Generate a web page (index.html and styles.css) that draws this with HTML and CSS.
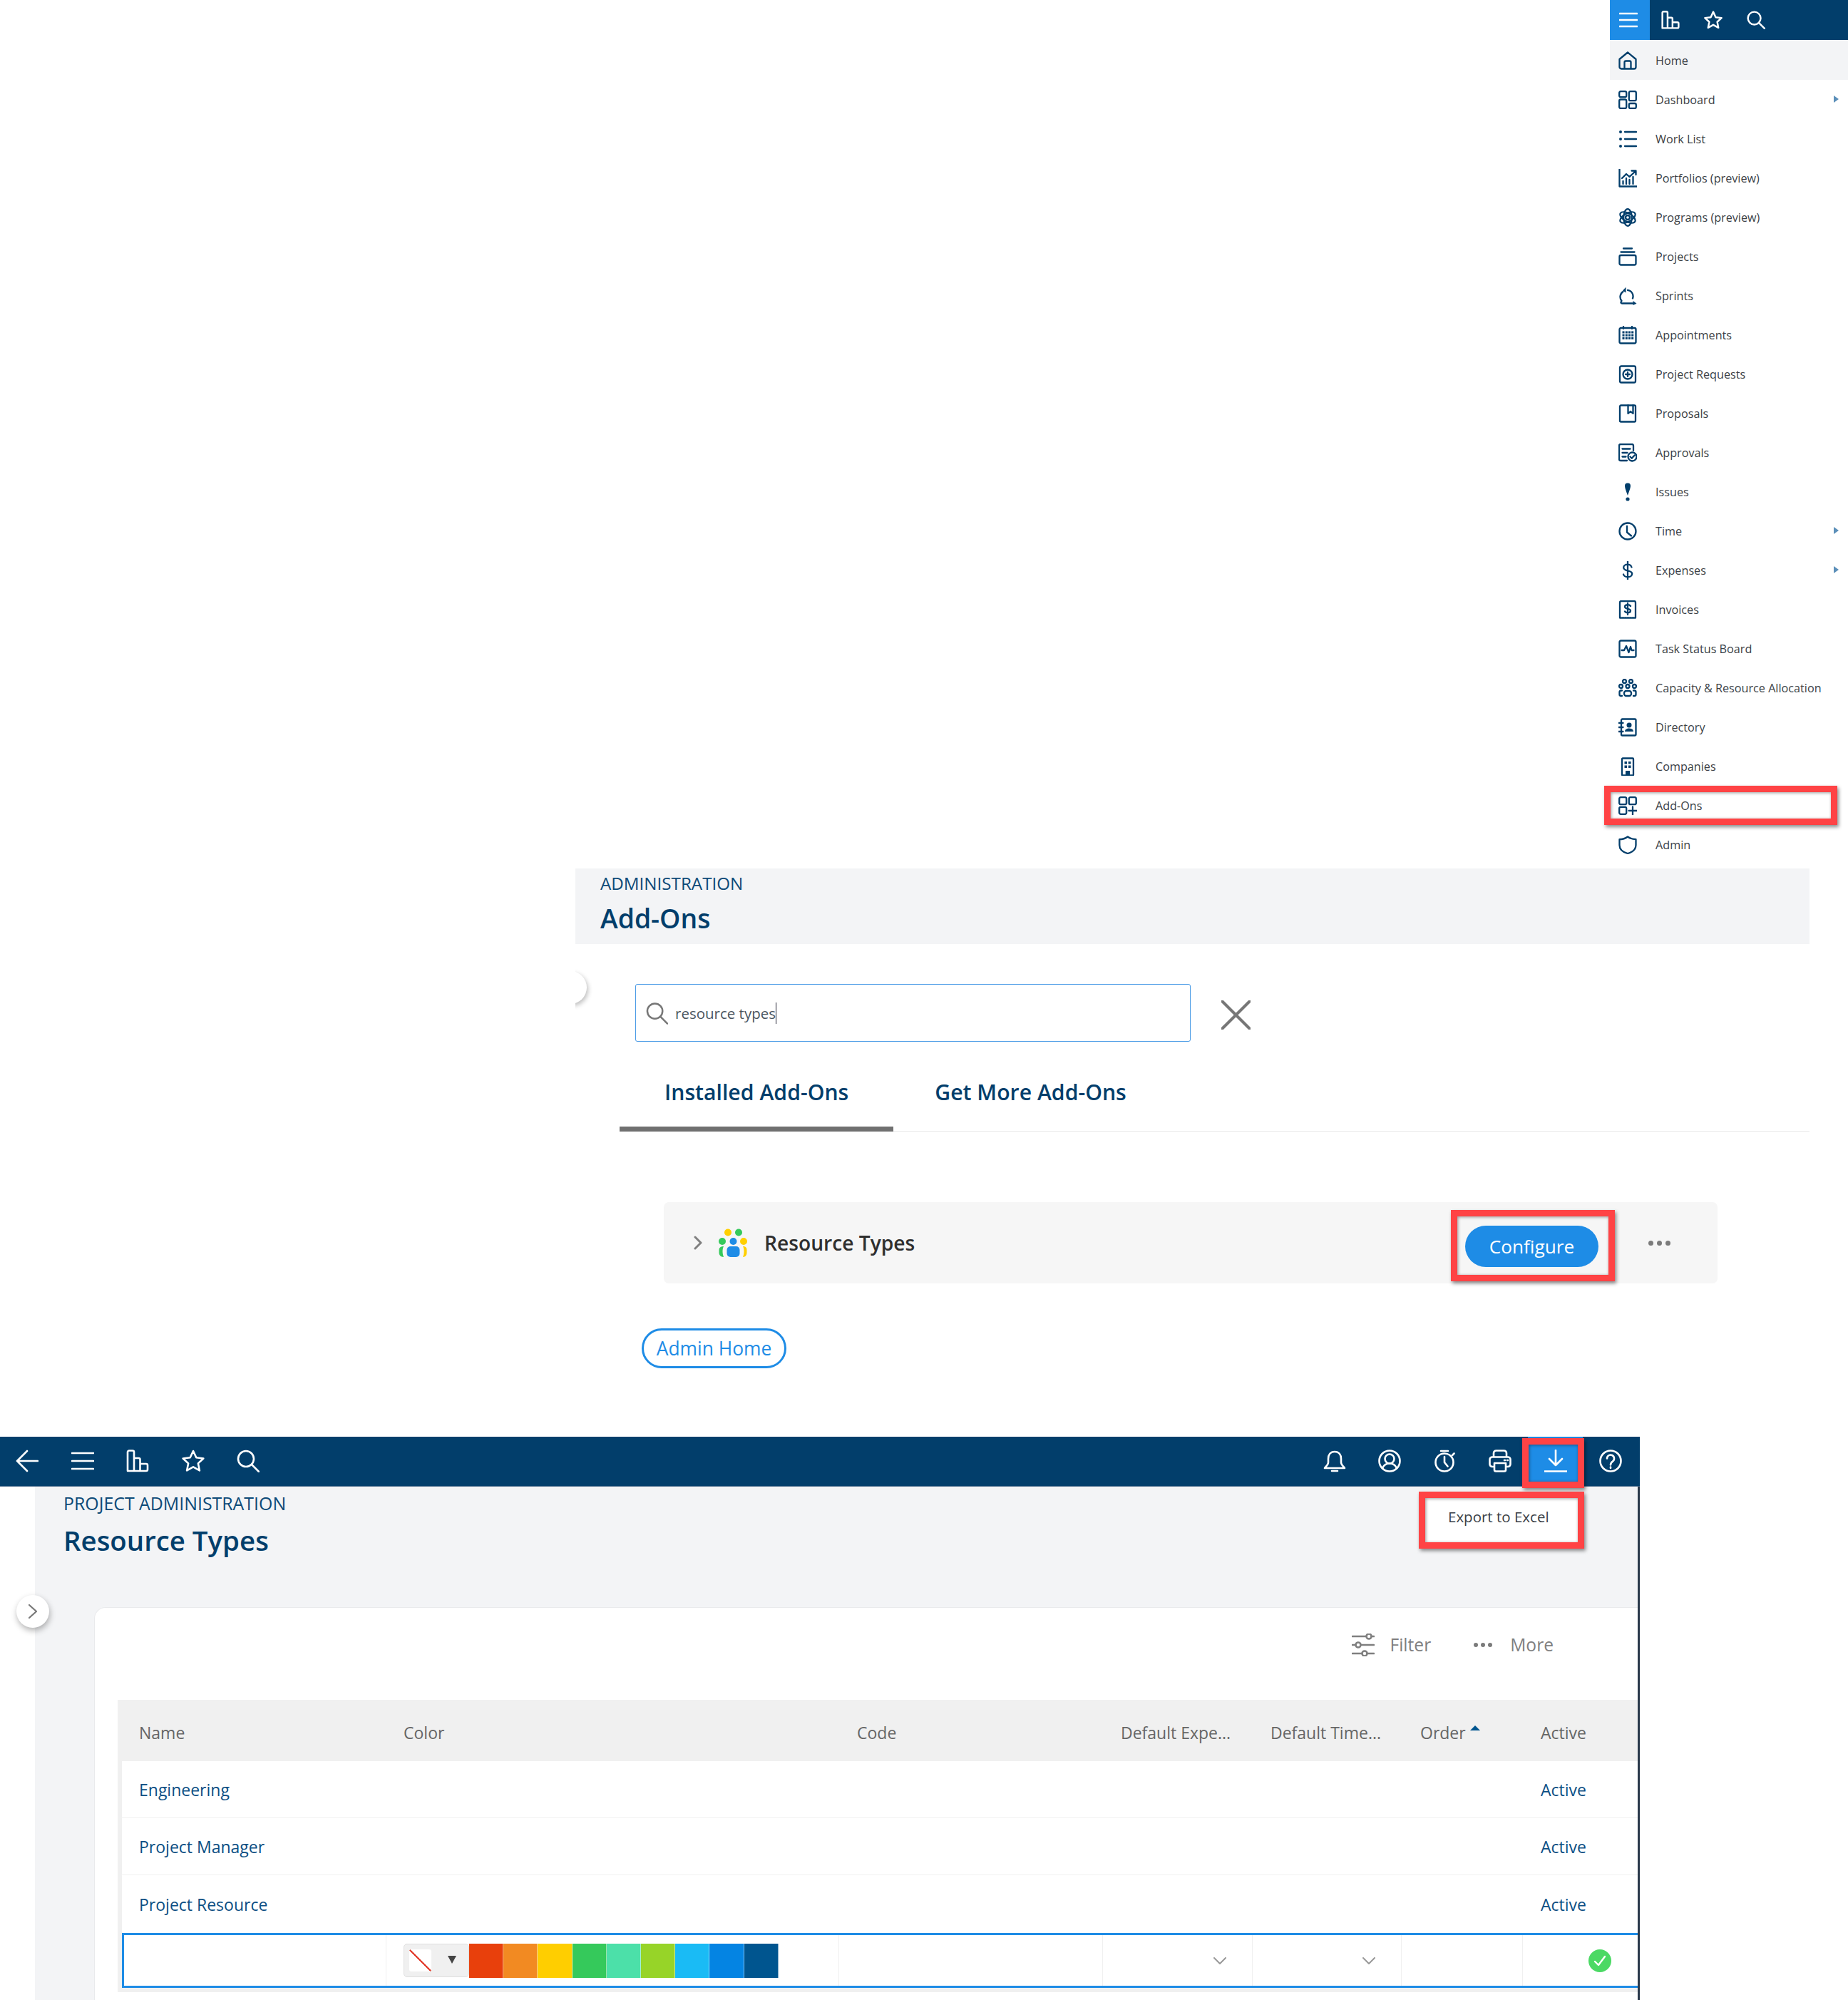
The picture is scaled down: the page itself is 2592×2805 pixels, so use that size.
FILE: index.html
```html
<!DOCTYPE html>
<html lang="en">
<head>
<meta charset="utf-8">
<title>Add-Ons and Resource Types</title>
<link rel="stylesheet" href="styles.css">
</head>
<body>
<svg class="sprite" width="0" height="0" aria-hidden="true">
  <defs>
    <symbol id="i-menu" viewBox="0 0 32 32"><path d="M1 5h30M1 16h30M1 27h30"/></symbol>
    <symbol id="i-bars" viewBox="0 0 32 32"><path d="M2 30V3.500a2 2 0 0 1 2-2h5a2 2 0 0 1 2 2V30zM11 12h6.500a2 2 0 0 1 2 2v16M19.500 20h8.500a2 2 0 0 1 2 2v6a2 2 0 0 1-2 2H11"/></symbol>
    <symbol id="i-star" viewBox="0 0 32 32"><path d="M16 2l4.300 9.300 10 1.200-7.400 6.900 2 10-8.900-5-8.900 5 2-10-7.400-6.900 10-1.200z"/></symbol>
    <symbol id="i-search" viewBox="0 0 32 32"><circle cx="13" cy="13" r="11"/><path d="M21 21l10 10"/></symbol>
    <symbol id="i-back" viewBox="0 0 32 32"><path d="M31 16H2M16 2L2 16l14 14"/></symbol>
    <symbol id="i-bell" viewBox="0 0 32 32"><path d="M16 3c-6 0-9 4.500-9 10v5c0 3-2.500 5-5 8h28c-2.500-3-5-5-5-8v-5c0-5.500-3-10-9-10zM12 30h8"/></symbol>
    <symbol id="i-user" viewBox="0 0 32 32"><circle cx="16" cy="16" r="14.500"/><circle cx="16" cy="13" r="6.500"/><path d="M6 26c2-4.500 5.500-6.500 10-6.500s8 2 10 6.500"/></symbol>
    <symbol id="i-timer" viewBox="0 0 32 32"><circle cx="15" cy="18" r="12.500"/><path d="M10 2h10M15 10v8l4.500 5.500M26 8l2.500-2.500"/></symbol>
    <symbol id="i-print" viewBox="0 0 32 32"><path d="M8 24H5a3.500 3.500 0 0 1-3.500-3.500V14A3.500 3.500 0 0 1 5 10.500h22a3.500 3.500 0 0 1 3.500 3.500v6.500A3.500 3.500 0 0 1 27 24h-3M7 10.500V5a3.500 3.500 0 0 1 3.500-3.500h11A3.500 3.500 0 0 1 25 5v5.500M8 19h16v9.500a2 2 0 0 1-2 2H10a2 2 0 0 1-2-2zM22 15h1M26 15h1"/></symbol>
    <symbol id="i-down" viewBox="0 0 32 32"><path d="M16 1v21M7 13l9 9 9-9M0 30.500h32"/></symbol>
    <symbol id="i-help" viewBox="0 0 32 32"><circle cx="16" cy="16" r="14.500"/><path d="M11 12.500a5 5 0 1 1 8 4c-2 1.500-3 2.500-3 5M16 24.500v1.500"/></symbol>
    <symbol id="i-filter" viewBox="0 0 32 32"><path d="M1 4h19M28 4h3M1 16h4M13 16h18M1 28h13M22 28h9"/><circle cx="24" cy="4" r="3.500"/><circle cx="9" cy="16" r="3.500"/><circle cx="18" cy="28" r="3.500"/></symbol>
    <symbol id="i-x" viewBox="0 0 40 40"><path d="M1 1l38 38M39 1L1 39"/></symbol>
    <symbol id="n-home" viewBox="0 0 26 26"><path d="M1.500 11L13 1.500 24.500 11v11a2.500 2.500 0 0 1-2.500 2.500H4A2.500 2.500 0 0 1 1.500 22zM8.500 24.500v-9a2 2 0 0 1 2-2h5a2 2 0 0 1 2 2v9"/></symbol>
    <symbol id="n-dash" viewBox="0 0 26 26"><rect x="1.200" y="1.200" width="10" height="8" rx="2"/><rect x="14.800" y="1.200" width="10" height="13" rx="2"/><rect x="1.200" y="12.500" width="10" height="12.500" rx="2"/><rect x="14.800" y="18" width="10" height="7" rx="2"/></symbol>
    <symbol id="n-list" viewBox="0 0 26 26"><path d="M9 3h16M9 13h16M9 23h16"/><circle class="solid" cx="3" cy="3" r="2"/><circle class="solid" cx="3" cy="13" r="2"/><circle class="solid" cx="3" cy="23" r="2"/></symbol>
    <symbol id="n-port" viewBox="0 0 26 26"><path d="M1.500 0v24.500H26M6.500 21v-4M11 21v-8M15.500 21v-6M20.500 21v-10M5 13l6-6 4.500 4L24 3M18.500 2.500H24.500V8"/></symbol>
    <symbol id="n-prog" viewBox="0 0 26 26"><circle cx="13" cy="13" r="3" stroke-width="2.400"/><ellipse cx="13" cy="13" rx="5.800" ry="11.800" stroke-width="2.200"/><ellipse cx="13" cy="13" rx="5.800" ry="11.800" stroke-width="2.200" transform="rotate(60 13 13)"/><ellipse cx="13" cy="13" rx="5.800" ry="11.800" stroke-width="2.200" transform="rotate(120 13 13)"/></symbol>
    <symbol id="n-proj" viewBox="0 0 26 26"><rect x="1.500" y="11" width="23" height="13.500" rx="2"/><path d="M3.500 6.500h19M7 1.500h12"/></symbol>
    <symbol id="n-sprint" viewBox="0 0 26 26"><path d="M6.500 7A8.800 8.800 0 0 0 4.500 20C3 22 3 23.500 5 23.500H20.500M13 4.800a8.800 8.800 0 0 1 7 11.700"/><path class="solid" d="M10.500 .800L6 5.500l4.500 3z"/><path class="solid" d="M20.500 20l5 3.700-5 2.300z"/></symbol>
    <symbol id="n-appt" viewBox="0 0 26 26"><rect x="1.500" y="3" width="23" height="21.500" rx="2"/><path d="M7 1v3M19 1v3"/><path class="solid" d="M5.500 7.500h3v3h-3zM9.800 7.500h3v3h-3zM14 7.500h3v3h-3zM18.200 7.500h3v3h-3zM5.500 11.800h3v3h-3zM9.800 11.800h3v3h-3zM14 11.800h3v3h-3zM18.200 11.800h3v3h-3zM5.500 16h3v3h-3zM9.800 16h3v3h-3zM14 16h3v3h-3zM18.200 16h3v3h-3z"/></symbol>
    <symbol id="n-req" viewBox="0 0 26 26"><rect x="2" y="1.500" width="22" height="23" rx="2"/><circle cx="13" cy="13" r="6.500"/><path d="M13 10v6M10 13h6"/></symbol>
    <symbol id="n-book" viewBox="0 0 26 26"><rect x="2" y="1.500" width="22" height="23" rx="1.500"/><path d="M13.500 1.500V13l3.500-3 3.500 3V1.500"/></symbol>
    <symbol id="n-appr" viewBox="0 0 26 26"><path d="M21 10V3a2 2 0 0 0-2-2H3a2 2 0 0 0-2 2v19a2 2 0 0 0 2 2h9M5.500 7.500h11M5.500 13h7M5.500 18.500h5"/><circle cx="19.500" cy="18.500" r="6"/><path d="M16.500 18.500l2.200 2.300 4-4.300"/></symbol>
    <symbol id="n-issue" viewBox="0 0 26 26"><path class="solid" d="M13 .500c2.800 0 4 1.200 4 4 0 3-2.800 10-4 13.500-1.200-3.500-4-10.500-4-13.500 0-2.800 1.200-4 4-4z"/><circle class="solid" cx="13" cy="23" r="2.600"/></symbol>
    <symbol id="n-time" viewBox="0 0 26 26"><circle cx="13" cy="13" r="11.500"/><path d="M12 6v8.500l6 5"/></symbol>
    <symbol id="n-dollar" viewBox="0 0 26 26"><path d="M18.500 8.500c-.8-2.500-3-3.800-5.500-3.800-3.500 0-5.800 1.800-5.800 4.300 0 6 12 3 12 8.800 0 2.700-2.700 4.400-6.200 4.400-3 0-5.200-1.300-6-3.700M13 .500v25"/></symbol>
    <symbol id="n-inv" viewBox="0 0 26 26"><path d="M2 24V3a2 2 0 0 1 2-2h18a2 2 0 0 1 2 2v21"/><path d="M2 24.500h22" stroke-dasharray="2 1.500"/><path d="M17 8c-.8-1.200-2.200-1.800-4-1.800-2.200 0-4 1-4 2.800 0 3.800 8 1.800 8 5.500 0 1.800-1.800 2.800-4 2.800-1.800 0-3.200-.6-4-1.800M13 4v16"/></symbol>
    <symbol id="n-task" viewBox="0 0 26 26"><rect x="1.500" y="1.500" width="23" height="23" rx="2"/><path d="M4.500 15h3.500l3-6 3.500 9 2.500-8 1.500 5h3"/></symbol>
    <symbol id="n-cap" viewBox="0 0 26 26"><circle cx="8.500" cy="3.500" r="2.500"/><circle cx="17.500" cy="3.500" r="2.500"/><circle cx="3.500" cy="10.500" r="2.500"/><circle cx="13" cy="10.500" r="2.500"/><circle cx="22.500" cy="10.500" r="2.500"/><rect x="8" y="17" width="10" height="7" rx="3"/><path d="M5 16.500H3.500a2 2 0 0 0-2 2V22a2 2 0 0 0 2 2H5M21 16.500h1.500a2 2 0 0 1 2 2V22a2 2 0 0 1-2 2H21"/></symbol>
    <symbol id="n-dir" viewBox="0 0 26 26"><rect x="4" y="1.500" width="20.500" height="23" rx="1.500"/><path d="M.500 7h6M.500 13h6M.500 19h6"/><circle class="solid" cx="15" cy="10" r="3.500"/><path class="solid" d="M9 19c0-3 3-4.500 6-4.500s6 1.500 6 4.500z"/></symbol>
    <symbol id="n-comp" viewBox="0 0 26 26"><rect x="5" y="1.500" width="16" height="24" rx="1"/><path class="solid" d="M8.500 6h3.500v3.500H8.500zM14 6h3.500v3.500H14zM8.500 11.500h3.500V15H8.500zM14 11.500h3.500V15H14zM10 19h6v6h-6z"/></symbol>
    <symbol id="n-add" viewBox="0 0 26 26"><rect x="1.200" y="1.200" width="10" height="10" rx="2"/><rect x="14.800" y="1.200" width="10" height="10" rx="2"/><rect x="1.200" y="14.800" width="10" height="10" rx="2"/><path d="M14.500 20h11.500M20 14.500V26"/></symbol>
    <symbol id="n-admin" viewBox="0 0 26 26"><path d="M13 1.500C9 4.500 6 5.200 1.500 5.200v8c0 6 5 10 11.500 11.800 6.500-1.800 11.500-5.800 11.500-11.800v-8C20 5.200 17 4.500 13 1.500z"/></symbol>
  </defs>
</svg>

<section class="menu-zone">
  <nav class="side">
    <div class="side-top">
      <span class="side-burger"><svg class="tb tb-small"><use href="#i-menu"/></svg></span>
      <svg class="tb tb-small"><use href="#i-bars"/></svg>
      <svg class="tb tb-small"><use href="#i-star"/></svg>
      <svg class="tb tb-small"><use href="#i-search"/></svg>
    </div>
    <ul class="side-list">
      <li class="side-item is-current"><svg class="nav-icon"><use href="#n-home"/></svg><span class="side-label">Home</span></li>
      <li class="side-item has-sub"><svg class="nav-icon"><use href="#n-dash"/></svg><span class="side-label">Dashboard</span></li>
      <li class="side-item"><svg class="nav-icon"><use href="#n-list"/></svg><span class="side-label">Work List</span></li>
      <li class="side-item"><svg class="nav-icon"><use href="#n-port"/></svg><span class="side-label">Portfolios (preview)</span></li>
      <li class="side-item"><svg class="nav-icon"><use href="#n-prog"/></svg><span class="side-label">Programs (preview)</span></li>
      <li class="side-item"><svg class="nav-icon"><use href="#n-proj"/></svg><span class="side-label">Projects</span></li>
      <li class="side-item"><svg class="nav-icon"><use href="#n-sprint"/></svg><span class="side-label">Sprints</span></li>
      <li class="side-item"><svg class="nav-icon"><use href="#n-appt"/></svg><span class="side-label">Appointments</span></li>
      <li class="side-item"><svg class="nav-icon"><use href="#n-req"/></svg><span class="side-label">Project Requests</span></li>
      <li class="side-item"><svg class="nav-icon"><use href="#n-book"/></svg><span class="side-label">Proposals</span></li>
      <li class="side-item"><svg class="nav-icon"><use href="#n-appr"/></svg><span class="side-label">Approvals</span></li>
      <li class="side-item"><svg class="nav-icon"><use href="#n-issue"/></svg><span class="side-label">Issues</span></li>
      <li class="side-item has-sub"><svg class="nav-icon"><use href="#n-time"/></svg><span class="side-label">Time</span></li>
      <li class="side-item has-sub"><svg class="nav-icon"><use href="#n-dollar"/></svg><span class="side-label">Expenses</span></li>
      <li class="side-item"><svg class="nav-icon"><use href="#n-inv"/></svg><span class="side-label">Invoices</span></li>
      <li class="side-item"><svg class="nav-icon"><use href="#n-task"/></svg><span class="side-label">Task Status Board</span></li>
      <li class="side-item"><svg class="nav-icon"><use href="#n-cap"/></svg><span class="side-label">Capacity &amp; Resource Allocation</span></li>
      <li class="side-item"><svg class="nav-icon"><use href="#n-dir"/></svg><span class="side-label">Directory</span></li>
      <li class="side-item"><svg class="nav-icon"><use href="#n-comp"/></svg><span class="side-label">Companies</span></li>
      <li class="side-item"><svg class="nav-icon"><use href="#n-add"/></svg><span class="side-label">Add-Ons</span></li>
      <li class="side-item"><svg class="nav-icon"><use href="#n-admin"/></svg><span class="side-label">Admin</span></li>
    </ul>
    <div class="mark mark-addons"></div>
  </nav>
</section>

<section class="addons">
  <header class="addons-head">
    <div class="eyebrow">ADMINISTRATION</div>
    <h1 class="page-title">Add-Ons</h1>
  </header>
  <div class="stub-toggle"></div>
  <div class="search-row">
    <div class="search-box">
      <svg class="search-icon"><use href="#i-search"/></svg>
      <span class="search-text">resource types</span><span class="caret"></span>
    </div>
    <svg class="clear-icon"><use href="#i-x"/></svg>
  </div>
  <div class="tabs">
    <div class="tab is-active">Installed Add-Ons</div>
    <div class="tab">Get More Add-Ons</div>
  </div>
  <div class="addon-card">
    <svg class="addon-chevron" viewBox="0 0 12 20"><path d="M2 2l8 8-8 8"/></svg>
    <svg class="addon-logo" viewBox="0 0 40 40">
      <circle cx="13" cy="5.500" r="5" fill="#ffcf00"/>
      <circle cx="28" cy="5.500" r="5" fill="#35c95b"/>
      <circle cx="5" cy="18" r="5" fill="#35c95b"/>
      <circle cx="20.500" cy="18" r="5" fill="#1e8ce6"/>
      <circle cx="35" cy="18" r="5" fill="#ffcf00"/>
      <rect x="11.500" y="25" width="18" height="15" rx="5" fill="#1e8ce6"/>
      <path d="M7 25c-3 0-6.500 1-6.500 5v4c0 3 2.500 6 6.500 6-1-3-1.500-5-1.500-8s.5-5 1.500-7z" fill="#35c95b"/>
      <path d="M34 25c3 0 5.500 1 5.500 5v4c0 3-2 6-5.500 6 1-3 1.500-5 1.500-8s-.5-5-1.500-7z" fill="#ffcf00"/>
    </svg>
    <span class="addon-name">Resource Types</span>
    <button class="btn-configure">Configure</button>
    <span class="dots dots-card"><i></i><i></i><i></i></span>
  </div>
  <button class="btn-outline">Admin Home</button>
  <div class="mark mark-configure"></div>
</section>

<section class="app">
  <div class="app-bar">
    <svg class="tb"><use href="#i-back"/></svg>
    <svg class="tb"><use href="#i-menu"/></svg>
    <svg class="tb"><use href="#i-bars"/></svg>
    <svg class="tb"><use href="#i-star"/></svg>
    <svg class="tb"><use href="#i-search"/></svg>
    <div class="bar-spacer"></div>
    <svg class="tb"><use href="#i-bell"/></svg>
    <svg class="tb"><use href="#i-user"/></svg>
    <svg class="tb"><use href="#i-timer"/></svg>
    <svg class="tb"><use href="#i-print"/></svg>
    <span class="bar-active"><svg class="tb"><use href="#i-down"/></svg></span>
    <svg class="tb"><use href="#i-help"/></svg>
  </div>
  <div class="app-main">
    <div class="eyebrow eyebrow-app">PROJECT ADMINISTRATION</div>
    <h2 class="page-title page-title-app">Resource Types</h2>
    <div class="panel">
      <div class="toolbar">
        <svg class="tool-icon"><use href="#i-filter"/></svg>
        <span class="tool-text">Filter</span>
        <span class="dots dots-tool"><i></i><i></i><i></i></span>
        <span class="tool-text">More</span>
      </div>
      <div class="grid-wrap">
        <div class="grid-row grid-head">
          <span>Name</span><span>Color</span><span>Code</span><span>Default Expe...</span><span>Default Time...</span><span class="sorted">Order</span><span>Active</span>
        </div>
        <div class="grid-body">
          <div class="grid-row grid-data">
            <span>Engineering</span><span></span><span></span><span></span><span></span><span></span><span>Active</span>
          </div>
          <div class="grid-row grid-data">
            <span>Project Manager</span><span></span><span></span><span></span><span></span><span></span><span>Active</span>
          </div>
          <div class="grid-row grid-data grid-last">
            <span>Project Resource</span><span></span><span></span><span></span><span></span><span></span><span>Active</span>
          </div>
          <div class="edit-row">
            <div class="edit-cell"></div>
            <div class="edit-cell cell-color">
              <div class="picker"><span class="picker-swatch"></span><span class="picker-caret"></span></div>
              <div class="palette">
                <i class="c1"></i><i class="c2"></i><i class="c3"></i><i class="c4"></i><i class="c5"></i><i class="c6"></i><i class="c7"></i><i class="c8"></i><i class="c9"></i>
              </div>
            </div>
            <div class="edit-cell"></div>
            <div class="edit-cell cell-select"><svg class="select-chevron" viewBox="0 0 18 10"><path d="M1 1l8 8 8-8"/></svg></div>
            <div class="edit-cell cell-select"><svg class="select-chevron" viewBox="0 0 18 10"><path d="M1 1l8 8 8-8"/></svg></div>
            <div class="edit-cell"></div>
            <div class="edit-cell cell-check">
              <svg class="check-badge" viewBox="0 0 32 32"><circle cx="16" cy="16" r="16"/><path d="M9 17l5 5 9-12"/></svg>
            </div>
          </div>
        </div>
      </div>
    </div>
  </div>
  <div class="round-toggle"><svg class="round-chevron" viewBox="0 0 14 22"><path d="M2 2l10 9-10 9"/></svg></div>
  <div class="popover">Export to Excel</div>
  <div class="mark mark-download"></div>
  <div class="mark mark-export"></div>
</section>
</body>
</html>
```

FILE: styles.css
```css
* { box-sizing: border-box; }
html, body { margin: 0; padding: 0; background: #fff; }
body {
  width: 2592px;
  height: 2805px;
  overflow: hidden;
  font-family: "Open Sans", "Noto Sans", sans-serif;
  color: #3b3f46;
}
.sprite { position: absolute; }
svg { fill: none; stroke: currentColor; stroke-linecap: round; stroke-linejoin: round; flex: none; }
.solid { fill: currentColor; stroke: none; }

.mark {
  position: absolute;
  border: 9px solid #ff4345;
  box-shadow: 2px 3px 5px rgba(0, 0, 0, .45), inset 1px 1px 4px rgba(0, 0, 0, .4);
  pointer-events: none;
}

/* Side menu */
.menu-zone { display: flex; justify-content: flex-end; height: 1218px; }
.side { position: relative; width: 334px; }
.side-top {
  display: flex;
  align-items: center;
  gap: 34px;
  height: 56px;
  background: #023e6b;
  color: #fff;
}
.side-burger {
  display: flex;
  align-items: center;
  justify-content: flex-start;
  width: 56px;
  height: 56px;
  padding-left: 13px;
  margin-right: -18px;
  background: #1e8ce6;
}
.tb { width: 32px; height: 32px; stroke-width: 2.6; color: #fff; }
.tb-small { width: 26px; height: 26px; stroke-width: 3; }
.side-list { list-style: none; margin: 1px 0 0; padding: 0; }
.side-item {
  position: relative;
  display: flex;
  align-items: center;
  gap: 26px;
  height: 55px;
  padding-left: 12px;
  font-size: 16.200px;
}
.side-item.is-current { background: #f3f4f6; }
.has-sub::after {
  content: "";
  position: absolute;
  right: 13px;
  top: 22px;
  border-left: 7px solid #5b8fb9;
  border-top: 5.5px solid transparent;
  border-bottom: 5.5px solid transparent;
}
.nav-icon { width: 26px; height: 26px; color: #023e6b; stroke-width: 2.3; }
.mark-addons { left: -8px; top: 1102px; width: 327px; height: 55px; }

/* Add-ons section */
.addons { position: relative; width: 1731px; height: 797px; margin-left: 807px; }
.addons-head { height: 106px; padding: 4px 0 0 35px; background: #f3f4f6; }
.eyebrow { font-size: 24.200px; line-height: 33px; color: #0d4a78; }
.page-title { margin: 0; font-size: 37.300px; font-weight: 600; line-height: 49px; color: #023e6b; }
.addons-head .page-title { margin-top: 8px; }
.stub-toggle {
  position: absolute;
  left: -30px;
  top: 144px;
  width: 46px;
  height: 46px;
  border-radius: 50%;
  background: #fff;
  box-shadow: 2px 3px 6px rgba(0, 0, 0, .25);
  clip-path: inset(-10px -10px -10px 30px);
}
.search-row { display: flex; align-items: center; gap: 43px; margin: 56px 0 0 84px; }
.search-box {
  display: flex;
  align-items: center;
  width: 779px;
  height: 81px;
  padding-left: 14px;
  border: 1.500px solid #4a9be6;
  border-radius: 3px;
  color: #777;
}
.search-icon { width: 31px; height: 32px; stroke-width: 2.6; margin-right: 10px; }
.search-text { font-size: 20.500px; color: #4a5560; }
.caret { width: 1px; height: 30px; background: #223; }
.clear-icon { width: 41px; height: 41px; stroke-width: 4; color: #777; margin-top: 5px; }
.tabs { display: flex; margin: 35px 0 0 62px; border-bottom: 1px solid #e8e8e8; }
.tab {
  height: 90px;
  padding: 0 63px;
  font-size: 30.200px;
  font-weight: 600;
  line-height: 71px;
  color: #023e6b;
}
.tab + .tab { padding-left: 58px; }
.tab.is-active { border-bottom: 7px solid #707070; margin-bottom: -1px; height: 91px; }
.addon-card {
  display: flex;
  align-items: center;
  width: 1478px;
  height: 114px;
  margin: 99px 0 0 124px;
  padding: 0 66px 0 42px;
  border-radius: 7px;
  background: #f6f6f6;
}
.addon-chevron { width: 12px; height: 20px; stroke-width: 3; color: #808080; margin-right: 23px; }
.addon-logo { width: 40px; height: 40px; stroke: none; margin-right: 24px; }
.addon-name { font-size: 28.200px; font-weight: 600; color: #2f2f2f; }
.btn-configure {
  width: 187px;
  height: 58px;
  margin: 10px 70px 0 auto;
  padding: 0;
  border: 0;
  border-radius: 29px;
  background: #1e8ce6;
  font: 400 26.200px "Open Sans", sans-serif;
  color: #fff;
}
.dots { display: inline-flex; gap: 5px; }
.dots i { border-radius: 50%; background: #7b7b7b; }
.dots-card i { width: 7px; height: 7px; }
.dots-card { width: 31px; gap: 5px; }
.btn-outline {
  display: block;
  width: 203px;
  height: 56px;
  margin: 63px 0 0 93px;
  padding: 0;
  border: 3px solid #1e8ce6;
  border-radius: 28px;
  background: #fff;
  font: 400 26.400px "Open Sans", sans-serif;
  color: #1e8ce6;
}
.mark-configure { left: 1228px; top: 479px; width: 230px; height: 100px; }

/* Resource types application */
.app { position: relative; width: 2300px; height: 790px; overflow: hidden; }
.app-bar {
  display: flex;
  align-items: center;
  gap: 45.500px;
  height: 70px;
  padding: 0 0 2px 22px;
  background: #023e6b;
  border-bottom: 1px solid #47698a;
}
.bar-spacer { flex: 1; }
.bar-active {
  display: flex;
  align-items: center;
  justify-content: center;
  align-self: stretch;
  width: 77px;
  margin: 0 -22.500px -3px;
  padding-bottom: 2px;
  background: #1e8ce6;
}
.app-bar > .tb:last-child { margin-right: 25px; }
.app-main {
  height: 720px;
  margin-left: 49px;
  padding: 7px 0 0 40px;
  background: #f3f4f6;
  border-right: 3px solid #2b3a4c;
  display: flex;
  flex-direction: column;
}
.eyebrow-app { flex: none; font-size: 24.900px; }
.page-title-app { flex: none; margin-top: 11px; font-size: 38.400px; }
.panel {
  flex: 1;
  margin: 69px 0 0 43px;
  background: #fff;
  border: 1px solid #e9eaec;
  border-right: 0;
  border-bottom: 0;
  border-radius: 16px 0 0 0;
}
.toolbar {
  display: flex;
  align-items: center;
  justify-content: flex-end;
  height: 129px;
  padding: 0 118px 26px 0;
  color: #7f7f7f;
}
.tool-icon { width: 32px; height: 32px; stroke-width: 2.6; margin-right: 21px; }
.tool-text { font-size: 24.600px; }
.dots-tool { margin: 0 25px 0 60px; gap: 4px; }
.dots-tool i { width: 6px; height: 6px; }
.grid-wrap { margin-left: 32px; font-size: 23px; }
.grid-row {
  display: grid;
  grid-template-columns: 371px 636px 370px 210px 210px 169px 1fr;
  align-items: center;
  padding-left: 30px;
}
.grid-head { height: 86px; background: #f0f0f0; color: #666; padding-top: 6px; }
.sorted { position: relative; }
.sorted::after {
  content: "";
  position: absolute;
  left: 70px;
  top: 6px;
  border-bottom: 7px solid #00558f;
  border-left: 7px solid transparent;
  border-right: 7px solid transparent;
}
.grid-body { padding: 0 0 6px 6px; background: #f0f0f0; }
.grid-data {
  height: 80px;
  padding-left: 24px;
  background: #fff;
  border-bottom: 1px solid #f1f1f1;
  color: #0d4f84;
}
.grid-last { height: 81px; border-bottom: 0; }
.edit-row {
  display: grid;
  grid-template-columns: 368px 635px 370px 210px 209px 170px 1fr;
  height: 77px;
  background: #fff;
  border: solid #1e8ce6;
  border-width: 3px 0 3px 3px;
}
.edit-cell { border-right: 1px solid #f0f0f0; }
.edit-cell:last-child { border-right: 0; }
.cell-color { display: flex; align-items: center; padding-left: 24px; }
.picker {
  position: relative;
  flex: none;
  width: 92px;
  height: 47px;
  padding: 7px;
  background: #f0f0f0;
  border: 1px solid #dedede;
  border-radius: 5px;
}
.picker-swatch {
  display: block;
  width: 31px;
  height: 31px;
  border-radius: 3px;
  background: linear-gradient(to top right, #fff 48%, #e23a2a 48%, #e23a2a 53%, #fff 53%);
}
.picker-caret {
  position: absolute;
  left: 61px;
  top: 16px;
  border-top: 11px solid #444;
  border-left: 6.5px solid transparent;
  border-right: 6.5px solid transparent;
}
.palette { display: flex; height: 48px; }
.palette i { width: 48.200px; border-right: 1px solid rgba(255, 255, 255, .5); }
.c1 { background: #e8400c; }
.c2 { background: #f28a22; }
.c3 { background: #ffce00; }
.c4 { background: #35c95b; }
.c5 { background: #4ce0a9; }
.c6 { background: #97d428; }
.c7 { background: #1abbf5; }
.c8 { background: #0484e3; }
.c9 { background: #00558f; }
.cell-select { display: flex; align-items: center; justify-content: flex-end; padding-right: 36px; }
.select-chevron { width: 18px; height: 10px; stroke-width: 2; color: #999; }
.cell-check { display: flex; align-items: center; padding-left: 92px; }
.check-badge { width: 32px; height: 32px; stroke: none; }
.check-badge circle { fill: #4bd964; }
.check-badge path { stroke: #fff; stroke-width: 2.4; fill: none; }
.round-toggle {
  position: absolute;
  left: 23px;
  top: 222px;
  display: flex;
  align-items: center;
  justify-content: center;
  width: 46px;
  height: 46px;
  border-radius: 50%;
  background: #fff;
  box-shadow: 1px 4px 8px rgba(0, 0, 0, .3);
}
.round-chevron { width: 14px; height: 22px; stroke-width: 2.2; color: #777; }
.popover {
  position: absolute;
  left: 1999px;
  top: 86px;
  width: 214px;
  height: 62px;
  padding: 12px 0 0 32px;
  background: #fff;
  font-size: 20.500px;
  color: #3b3f46;
}
.mark-download { left: 2135px; top: 2px; width: 87px; height: 70px; }
.mark-export { left: 1990px; top: 77px; width: 232px; height: 80px; }
```
